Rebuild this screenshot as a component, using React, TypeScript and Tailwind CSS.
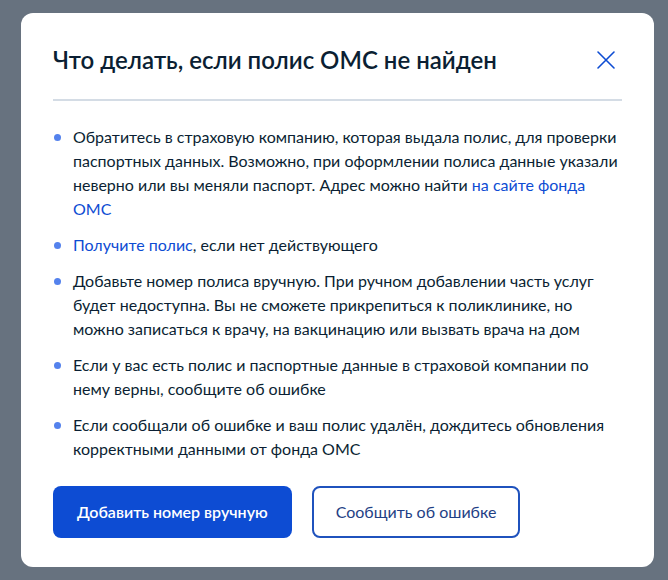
import React from "react";

const items: React.ReactNode[] = [
  <>
    Обратитесь в страховую компанию, которая выдала полис, для проверки
    паспортных данных. Возможно, при оформлении полиса данные указали неверно
    или вы меняли паспорт. Адрес можно найти{" "}
    <a className="text-[#0d4cd3]" href="#">
      на сайте фонда ОМС
    </a>
  </>,
  <>
    <a className="text-[#0d4cd3]" href="#">
      Получите полис
    </a>
    , если нет действующего
  </>,
  <>
    Добавьте номер полиса вручную. При ручном добавлении часть услуг будет
    недоступна. Вы не сможете прикрепиться к поликлинике, но можно записаться к
    врачу, на вакцинацию или вызвать врача на дом
  </>,
  <>
    Если у вас есть полис и паспортные данные в страховой компании по нему
    верны, сообщите об ошибке
  </>,
  <>
    Если сообщали об ошибке и ваш полис удалён, дождитесь обновления
    корректными данными от фонда ОМС
  </>,
];

export default function App() {
  return (
    <div
      className="min-h-[580px] bg-[#67727f] px-[21px] pt-[13px]"
      style={{ fontFamily: "Lato, 'Noto Sans', sans-serif" }}
    >
      <div className="w-[633px] rounded-xl bg-white px-8 pb-[29px] pt-8 text-[#0b1f33]">
        <div className="flex items-center justify-between">
          <h1 className="text-[24px] font-semibold leading-[30px]">
            Что делать, если полис ОМС не найден
          </h1>
          <button className="mr-[6px] text-[#0d4cd3]" aria-label="Закрыть">
            <svg width="20" height="20" viewBox="0 0 20 20" fill="none">
              <path
                d="M2 2L18 18M18 2L2 18"
                stroke="currentColor"
                strokeWidth="1.6"
                strokeLinecap="round"
              />
            </svg>
          </button>
        </div>
        <div className="mt-6 h-[2px] bg-[#d4dce5]" />
        <ul className="mt-6 flex flex-col gap-3">
          {items.map((it, i) => (
            <li key={i} className="flex text-[16px] leading-6">
              <span className="w-5 shrink-0 pt-[9px] pl-[1px]">
                <span className="block h-[7px] w-[7px] rounded-full bg-[#5482ed]" />
              </span>
              <span>{it}</span>
            </li>
          ))}
        </ul>
        <div className="mt-[25px] flex gap-5">
          <button className="h-[52px] rounded-lg bg-[#0d4cd3] px-6 text-[16px] font-semibold text-white">
            Добавить номер вручную
          </button>
          <button className="h-[52px] rounded-lg border-2 border-[#1f52bd] px-[22px] text-[16px] text-[#1f3f85]">
            Сообщить об ошибке
          </button>
        </div>
      </div>
    </div>
  );
}
